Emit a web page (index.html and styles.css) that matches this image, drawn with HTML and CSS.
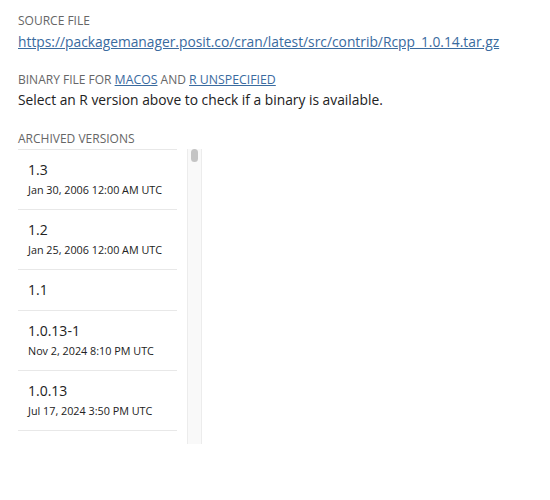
FILE: index.html
```html
<!DOCTYPE html>
<html lang="en">
<head>
    <meta charset="UTF-8">
    <meta name="viewport" content="width=device-width, initial-scale=1.0">
    <title>Rcpp downloads</title>
    <link rel="stylesheet" href="styles.css">
</head>
<body>
    <div class="section">
        <div class="label">Source file</div>
        <a class="link" href="#">https://packagemanager.posit.co/cran/latest/src/contrib/Rcpp_1.0.14.tar.gz</a>
    </div>

    <div class="section">
        <div class="label">Binary file for <a href="#">macOS</a> and <a href="#">R unspecified</a></div>
        <p class="note">Select an R version above to check if a binary is available.</p>
    </div>

    <div class="section">
        <div class="label label-list">Archived versions</div>
        <div class="archive">
            <ul class="versions">
                <li>
                    <div class="version">1.3</div>
                    <div class="date">Jan 30, 2006 12:00 AM UTC</div>
                </li>
                <li>
                    <div class="version">1.2</div>
                    <div class="date">Jan 25, 2006 12:00 AM UTC</div>
                </li>
                <li>
                    <div class="version">1.1</div>
                </li>
                <li>
                    <div class="version">1.0.13-1</div>
                    <div class="date">Nov 2, 2024 8:10 PM UTC</div>
                </li>
                <li>
                    <div class="version">1.0.13</div>
                    <div class="date">Jul 17, 2024 3:50 PM UTC</div>
                </li>
            </ul>
            <div class="scrollbar"><div class="thumb"></div></div>
        </div>
    </div>
</body>
</html>
```

FILE: styles.css
```css
body {
    font-family: "Open Sans", Arial, sans-serif;
    color: #222;
    background: #fff;
    margin: 0;
    padding: 12px 18px;
}
.section {
    margin-bottom: 19px;
}
.label {
    font-size: 12px;
    line-height: 18px;
    text-transform: uppercase;
    color: #666;
}
.label-list {
    margin-bottom: 1px;
}
.label a,
.link {
    color: #3a6b9f;
    text-decoration: underline;
}
.label a {
    font-size: 12.3px;
}
.link {
    font-size: 13.8px;
    line-height: 21px;
}
.note {
    margin: 0;
    font-size: 13.8px;
    line-height: 22px;
}
.archive {
    display: flex;
    align-items: flex-start;
    height: 295px;
}
.versions {
    list-style: none;
    margin: 0;
    padding: 0;
    width: 159px;
    border-top: 1px solid #e8e8e8;
}
.versions li {
    padding: 10px 10px;
    border-bottom: 1px solid #e8e8e8;
}
.version {
    font-size: 14px;
    line-height: 20px;
}
.date {
    font-size: 10.8px;
    line-height: 19px;
}
.scrollbar {
    margin-left: 10px;
    width: 15px;
    height: 100%;
    box-sizing: border-box;
    background: #f9f9f9;
    border-left: 1px solid #ececec;
    border-right: 1px solid #ececec;
    padding: 0 3px;
}
.thumb {
    height: 13px;
    border-radius: 4px;
    background: #c4c4c4;
}
```
